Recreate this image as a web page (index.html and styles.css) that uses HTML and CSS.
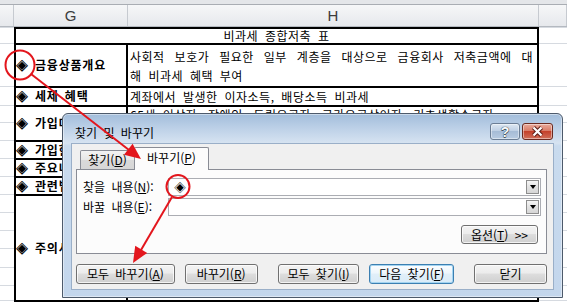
FILE: index.html
```html
<!DOCTYPE html>
<html lang="ko">
<head>
  <meta charset="UTF-8" />
  <meta name="viewport" content="width=device-width, initial-scale=1.0" />
  <title>비과세 종합저축 - 찾기 및 바꾸기</title>
  <link rel="stylesheet" href="styles.css">
</head>
<body>
  <div class="sheet">
    <div class="top-strip"></div>
    <div class="col-head">
      <div class="hd"></div>
      <div class="hd">G</div>
      <div class="hd">H</div>
      <div class="hd"></div>
    </div>

    <div class="grid">
      <!-- 1: title -->
      <div class="out-l"></div>
      <div class="cell sheet-title">비과세 종합저축 표</div>
      <div class="out-r"></div>

      <!-- 2 -->
      <div class="out-l"></div>
      <div class="cell lbl">◈ 금융상품개요</div>
      <div class="cell txt">
        <p class="just">사회적 보호가 필요한 일부 계층을 대상으로 금융회사 저축금액에 대</p>
        <p>해 비과세 혜택 부여</p>
      </div>
      <div class="out-r"></div>

      <!-- 3 -->
      <div class="out-l"></div>
      <div class="cell lbl">◈ 세제 혜택</div>
      <div class="cell txt"><p>계좌에서 발생한 이자소득, 배당소득 비과세</p></div>
      <div class="out-r"></div>

      <!-- 4-5 -->
      <div class="out-l"></div>
      <div class="cell lbl span2">◈ 가입대상</div>
      <div class="cell txt span2">
        <p>65세 이상자, 장애인, 독립유공자, 국가유공상이자, 기초생활수급자</p>
        <p>등 (2014년 12월 31일까지 가입)</p>
      </div>
      <div class="out-r"></div>
      <div class="out-l"></div>
      <div class="out-r"></div>

      <!-- 6 -->
      <div class="out-l"></div>
      <div class="cell lbl">◈ 가입한도</div>
      <div class="cell txt"><p>1인당 3,000만원</p></div>
      <div class="out-r"></div>

      <!-- 7 -->
      <div class="out-l"></div>
      <div class="cell lbl">◈ 주요내용</div>
      <div class="cell txt"><p>예금, 적금, 부금, 보험, 공제, 증권저축 등</p></div>
      <div class="out-r"></div>

      <!-- 8 -->
      <div class="out-l"></div>
      <div class="cell lbl">◈ 관련법규</div>
      <div class="cell txt"><p>조세특례제한법 제88조의2</p></div>
      <div class="out-r"></div>

      <!-- 9-14 -->
      <div class="out-l"></div>
      <div class="cell lbl span6">◈ 주의사항</div>
      <div class="cell txt span6"><p>중도 해지 시에도 비과세 혜택 유지</p></div>
      <div class="out-r"></div>
      <div class="out-l"></div>
      <div class="out-r"></div>
      <div class="out-l"></div>
      <div class="out-r"></div>
      <div class="out-l"></div>
      <div class="out-r"></div>
      <div class="out-l"></div>
      <div class="out-r"></div>
      <div class="out-l"></div>
      <div class="out-r"></div>

      <!-- 15: below table -->
      <div class="out-l"></div>
      <div class="below"></div>
      <div class="out-r"></div>
    </div>
  </div>

  <div class="dialog">
    <div class="titlebar">
      <span class="dlg-title">찾기 및 바꾸기</span>
      <div class="caption-btns">
        <span class="cap help">?</span>
        <span class="cap close">
          <svg width="13" height="11" viewBox="0 0 13 11">
            <path d="M2.5 1.5 L10.5 9.5 M10.5 1.5 L2.5 9.5" stroke="#5b1d15" stroke-width="4.2" fill="none"/>
            <path d="M2.5 1.5 L10.5 9.5 M10.5 1.5 L2.5 9.5" stroke="#fff" stroke-width="2.2" fill="none"/>
          </svg>
        </span>
      </div>
    </div>

    <div class="client">
      <div class="tabs">
        <span class="tab">찾기(<u>D</u>)</span>
        <span class="tab active">바꾸기(<u>P</u>)</span>
      </div>

      <div class="panel">
        <div class="field">
          <label>찾을 내용(<u>N</u>):</label>
          <div class="combo"><span class="val">◈</span><span class="drop"></span></div>
        </div>
        <div class="field">
          <label>바꿀 내용(<u>E</u>):</label>
          <div class="combo"><span class="val"></span><span class="drop"></span></div>
        </div>
        <div class="opt-row">
          <button class="btn btn-options">옵션(<u>T</u>) &gt;&gt;</button>
        </div>
      </div>

      <div class="actions">
        <button class="btn btn-replace-all">모두 바꾸기(<u>A</u>)</button>
        <button class="btn btn-replace">바꾸기(<u>R</u>)</button>
        <button class="btn btn-find-all">모두 찾기(<u>I</u>)</button>
        <button class="btn btn-find-next default">다음 찾기(<u>F</u>)</button>
        <button class="btn btn-close">닫기</button>
      </div>
    </div>
  </div>

  <svg class="marks" width="567" height="305" viewBox="0 0 567 305">
    <g fill="none" stroke="#e3161d" stroke-width="2">
      <circle cx="20" cy="65" r="14.5"/>
      <line x1="31" y1="74" x2="129" y2="150"/>
      <ellipse cx="178" cy="186.5" rx="11.5" ry="11.5"/>
      <line x1="172" y1="197" x2="141" y2="250"/>
    </g>
    <g fill="#e3161d">
      <polygon points="141,159 124,154.7 132.6,143.7"/>
      <polygon points="133,263 135.2,245.7 147.2,252.9"/>
    </g>
  </svg>
</body>
</html>
```

FILE: styles.css
```css
* {
  box-sizing: border-box;
  margin: 0;
  padding: 0;
}

body {
  position: relative;
  width: 567px;
  height: 305px;
  overflow: hidden;
  background: #fff;
  font-family: "Noto Sans CJK KR", "Noto Sans", sans-serif;
  font-size: 12px;
  color: #000;
}

/* ---------- spreadsheet ---------- */

.top-strip {
  height: 5px;
  background: #e4e6e9;
  border-bottom: 1px solid #a9adb3;
}

.col-head {
  display: grid;
  grid-template-columns: 14px 114px 411px 28px;
  height: 22px;
  background: linear-gradient(#f6f7f8, #e6e8ec);
  border-bottom: 1px solid #b4b9c0;
}

.col-head .hd {
  display: flex;
  align-items: center;
  justify-content: center;
  border-right: 1px solid #c6cad0;
  font-family: "Liberation Sans", Arial, sans-serif;
  font-size: 15px;
  color: #3c3c3c;
}

.grid {
  display: grid;
  grid-template-columns: 14px 114px 411px 28px;
  grid-template-rows: 16px 43px 19px 17px 18px 18px 18px 18px 18px 18px 18px 19px 18px 15px 18px;
}

.out-l,
.out-r {
  border-top: 1px solid #d6dae0;
}
.out-l { grid-column: 1; }
.out-r { grid-column: 4; }

.cell {
  border-top: 2px solid #000;
  word-spacing: 3px;
  letter-spacing: 0.5px;
}

.sheet-title {
  grid-column: 2 / 4;
  display: flex;
  align-items: center;
  justify-content: center;
  border-left: 2px solid #000;
  border-right: 2px solid #000;
  line-height: 14px;
}

.lbl {
  grid-column: 2;
  display: flex;
  align-items: center;
  border-left: 2px solid #000;
  border-right: 2px solid #000;
  font-weight: 700;
  letter-spacing: 0.8px;
  word-spacing: 2px;
  white-space: nowrap;
  overflow: hidden;
}

.txt {
  grid-column: 3;
  display: flex;
  flex-direction: column;
  justify-content: center;
  border-right: 2px solid #000;
  padding: 0 4px 0 2px;
  line-height: 19px;
  white-space: nowrap;
}

.txt .just {
  white-space: normal;
  text-align: justify;
  text-align-last: justify;
}

.span2 { grid-row: span 2; }
.span6 { grid-row: span 6; }

.below {
  grid-column: 2 / 4;
  border-top: 2px solid #000;
}

/* ---------- find & replace dialog ---------- */

.dialog {
  position: absolute;
  left: 62px;
  top: 113px;
  width: 501px;
  height: 185px;
  display: flex;
  flex-direction: column;
  padding: 0 8px 7px;
  border: 1px solid #4d5a6b;
  border-radius: 6px 6px 0 0;
  background: linear-gradient(#a2bddb, #bcd0e7 14px, #d6e3f1 29px, #c9dbee 32px, #c3d6ec);
  box-shadow: inset 0 0 0 1px rgba(255, 255, 255, 0.45);
  z-index: 2;
}

.titlebar {
  height: 29px;
  display: flex;
  justify-content: space-between;
  align-items: flex-start;
  padding-left: 4px;
}

.dlg-title {
  margin-top: 11px;
  line-height: 16px;
  word-spacing: 3px;
}

.caption-btns {
  display: flex;
  gap: 2px;
  margin-top: 9px;
  margin-right: 1px;
}

.cap {
  width: 30px;
  height: 17px;
  display: flex;
  align-items: center;
  justify-content: center;
  border: 1px solid #6b7d94;
  border-radius: 3px;
  box-shadow: inset 0 0 0 1px rgba(255, 255, 255, 0.45);
}

.cap.help {
  background: linear-gradient(#dde7f2, #bfd0e4 45%, #a6bcd6 50%, #b8cbe1);
  font-family: "Liberation Sans", Arial, sans-serif;
  font-size: 14px;
  font-weight: 700;
  color: #f7f9fb;
  text-shadow: 0 0 1px #34414f, 0 0 1px #34414f, 0 1px 0 #485869;
}

.cap.close {
  width: 31px;
  border-color: #6b2a20;
  background: linear-gradient(#e9aa9b, #d97c68 45%, #c4412b 50%, #d0705b);
}

.client {
  flex: 1;
  display: flex;
  flex-direction: column;
  padding: 3px 6px 0 4px;
  background: #f0f0f0;
  border: 1px solid #9aafc8;
}

.tabs {
  display: flex;
  align-items: flex-end;
  padding-left: 4px;
}

.tab {
  height: 19px;
  width: 55px;
  display: flex;
  align-items: center;
  justify-content: center;
  border: 1px solid #898c95;
  border-bottom: none;
  border-radius: 2px 2px 0 0;
  background: linear-gradient(#f3f3f3, #e6e6e6 50%, #dadada 50%, #d6d6d6);
  line-height: 14px;
}

.tab.active {
  position: relative;
  z-index: 1;
  width: 75px;
  height: 23px;
  margin-left: -1px;
  margin-bottom: -1px;
  padding-bottom: 2px;
  background: #fcfcfc;
}

.panel {
  height: 85px;
  padding: 8px 5px 0 6px;
  background: #fcfcfc;
  border: 1px solid #898c95;
}

.field {
  display: flex;
  align-items: center;
  height: 18px;
  margin-bottom: 2px;
}

.field label {
  flex: 0 0 85px;
  word-spacing: 3px;
  line-height: 14px;
}

.combo {
  width: 373px;
  height: 18px;
  display: flex;
  align-items: center;
  justify-content: space-between;
  padding: 1px;
  background: #fff;
  border: 1px solid #abadb3;
}

.combo .val {
  padding-left: 4px;
  line-height: 14px;
}

.combo .drop {
  width: 13px;
  height: 14px;
  display: flex;
  align-items: center;
  justify-content: center;
  border: 1px solid #8d8d8d;
  background: linear-gradient(#f6f6f6, #e2e2e2 50%, #d6d6d6);
}

.combo .drop::after {
  content: "";
  border-left: 3.5px solid transparent;
  border-right: 3.5px solid transparent;
  border-top: 4px solid #000;
}

.opt-row {
  display: flex;
  justify-content: flex-end;
  margin-top: 9px;
  padding-right: 3px;
}

.btn {
  height: 20px;
  display: flex;
  align-items: center;
  justify-content: center;
  border: 1px solid #707070;
  border-radius: 3px;
  background: linear-gradient(#f3f3f3, #ececec 45%, #dddddd 50%, #cfcfcf);
  box-shadow: inset 0 0 0 1px rgba(255, 255, 255, 0.75);
  font: 12px "Noto Sans CJK KR", "Noto Sans", sans-serif;
  line-height: 14px;
  word-spacing: 3px;
  color: #000;
}

.btn.default {
  border-color: #3c7fb1;
  background: linear-gradient(#fbfdff, #eef6fc 45%, #e1eff9 50%, #d9ebf8);
  box-shadow: inset 0 0 0 1px #a3d4f1;
}

.btn-options { width: 77px; height: 19px; }

.actions {
  display: flex;
  margin-top: 10px;
}

.btn-replace-all { width: 99px; }
.btn-replace { width: 73px; margin-left: 10px; }
.btn-find-all { width: 82px; margin-left: 20px; }
.btn-find-next { width: 85px; margin-left: 10px; }
.btn-close { width: 73px; margin-left: 20px; }

/* ---------- red annotations ---------- */

.marks {
  position: absolute;
  left: 0;
  top: 0;
  z-index: 3;
  pointer-events: none;
}
```
